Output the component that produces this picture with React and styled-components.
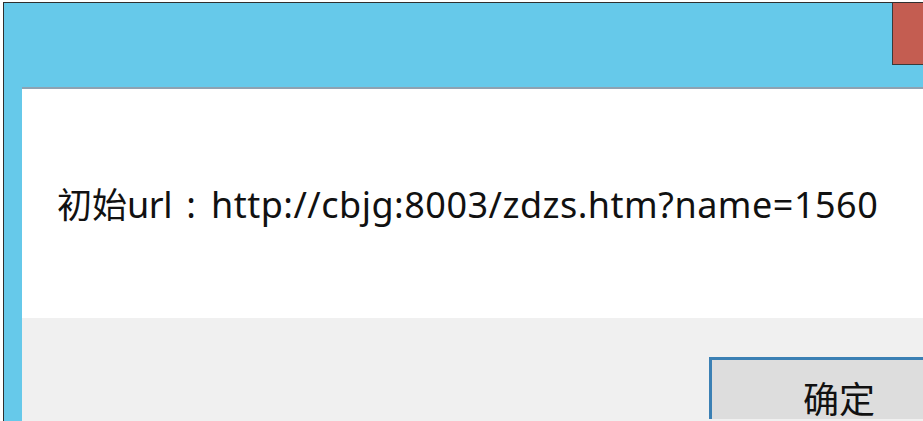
import React from "react";
import styled, { createGlobalStyle } from "styled-components";

const Global = createGlobalStyle`
  html, body {
    margin: 0;
    padding: 0;
    background: #ffffff;
    overflow: hidden;
  }
  body {
    font-family: "Noto Sans", "Noto Sans CJK SC", sans-serif;
  }
`;

const Window = styled.div`
  margin: 2px 0 0 3px;
  width: 920px;
  height: 419px;
  box-sizing: border-box;
  overflow: hidden;
  border-top: 1px solid #2f2f2f;
  border-left: 1px solid #2f2f2f;
  background: #66c9ea;
  display: flex;
  flex-direction: column;
`;

const TitleBar = styled.div`
  height: 84px;
  flex-shrink: 0;
  display: flex;
  justify-content: flex-end;
  align-items: flex-start;
`;

const CloseButton = styled.div`
  width: 31px;
  height: 62px;
  background: #c45d51;
  border-left: 1px solid #3a3a3a;
  border-bottom: 1px solid #3a3a3a;
  box-sizing: border-box;
`;

const Frame = styled.div`
  flex: 1;
  display: flex;
  padding-left: 18px;
  min-height: 0;
`;

const Client = styled.div`
  flex: 1;
  display: flex;
  flex-direction: column;
  border-top: 2px solid #8ea2b2;
  min-width: 0;
`;

const MessagePanel = styled.div`
  background: #ffffff;
  height: 229px;
  flex-shrink: 0;
  box-sizing: border-box;
  padding: 92px 0 0 35px;
`;

const Message = styled.div`
  font-size: 36px;
  letter-spacing: 0.5px;
  line-height: 44px;
  color: #111111;
  white-space: nowrap;
`;

const Cjk = styled.span`
  font-family: "Noto Sans CJK SC", sans-serif;
  font-size: 35px;
  letter-spacing: 0;
`;

const Word = styled.span`
  letter-spacing: -0.5px;
`;

const Colon = styled.span`
  display: inline-block;
  width: 39px;
  text-align: center;
`;

const ButtonBar = styled.div`
  flex: 1;
  background: #f0f0f0;
  display: flex;
  align-items: flex-start;
  padding: 39px 0 0 687px;
`;

const OkButton = styled.button`
  flex-shrink: 0;
  width: 260px;
  height: 62px;
  box-sizing: border-box;
  background: #dddddd;
  border: 3px solid #3b80b4;
  border-bottom: none;
  padding: 19px 0 0 0;
  display: flex;
  justify-content: center;
  align-items: flex-start;
  font-family: "Noto Sans CJK SC", sans-serif;
  font-size: 36px;
  line-height: 36px;
  color: #111111;
`;

export default function App() {
  return (
    <>
      <Global />
      <Window>
        <TitleBar>
          <CloseButton />
        </TitleBar>
        <Frame>
          <Client>
            <MessagePanel>
              <Message>
                <Cjk>初始</Cjk>
                <Word>url</Word>
                <Colon>:</Colon>http://cbjg:8003/zdzs.htm?name=1560
              </Message>
            </MessagePanel>
            <ButtonBar>
              <OkButton>确定</OkButton>
            </ButtonBar>
          </Client>
        </Frame>
      </Window>
    </>
  );
}
